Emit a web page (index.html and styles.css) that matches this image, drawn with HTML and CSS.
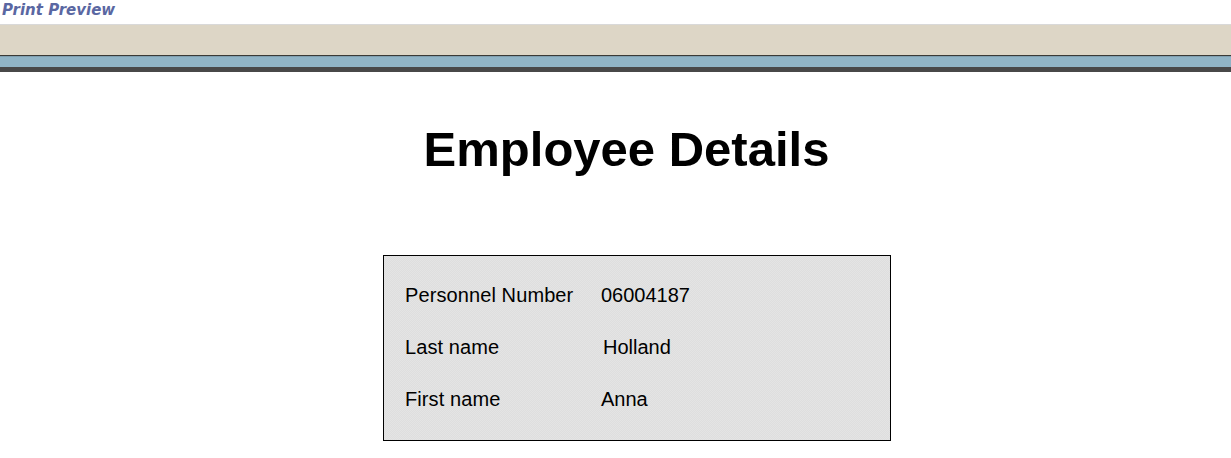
FILE: index.html
```html
<!DOCTYPE html>
<html>
<head>
<meta charset="utf-8">
<link rel="stylesheet" href="styles.css">
</head>
<body>
<header class="topbar">
  <div class="title-strip"><span class="app-title">Print Preview</span></div>
  <div class="toolbar"></div>
  <div class="band-blue"></div>
  <div class="band-dark"></div>
</header>
<main class="page">
  <h1 class="doc-title">Employee Details</h1>
  <section class="details">
    <div class="label">Personnel Number</div><div class="value">06004187</div>
    <div class="label">Last name</div><div class="value value-h">Holland</div>
    <div class="label">First name</div><div class="value">Anna</div>
  </section>
</main>
</body>
</html>
```
FILE: styles.css
```css
html, body {
  margin: 0;
  padding: 0;
  background: #ffffff;
}
body {
  font-family: "Liberation Sans", Arial, sans-serif;
  color: #000;
}
.title-strip {
  box-sizing: border-box;
  height: 25px;
  border-bottom: 1px solid #d9d9d9;
  padding: 1px 0 0 2px;
}
.app-title {
  font-family: "DejaVu Sans", Verdana, sans-serif;
  font-weight: bold;
  font-style: italic;
  font-size: 15px;
  line-height: 19px;
  color: #5a67a2;
}
.toolbar {
  height: 30px;
  background: #ddd6c6;
  border-bottom: 1px solid #3a3a36;
}
.band-blue {
  height: 11px;
  background: #90b4c6;
  border-top: 1px solid #7f9fb0;
  box-sizing: border-box;
}
.band-dark {
  height: 5px;
  background: #484848;
}
.page {
  display: flex;
  flex-direction: column;
}
.doc-title {
  margin: 53px 0 0 22px;
  font-size: 49px;
  line-height: 49px;
  font-weight: bold;
  text-align: center;
}
.details {
  box-sizing: border-box;
  margin: 81px 0 0 383px;
  width: 508px;
  border: 1px solid #000;
  background-color: #e1e1e1;
  background-image: repeating-conic-gradient(#dedede 0 25%, #e4e4e4 0 50%);
  background-size: 2px 2px;
  padding: 29px 0 31px 21px;
  display: grid;
  grid-template-columns: 196px auto;
  row-gap: 32px;
  font-size: 20px;
  line-height: 20px;
}
.label {
  letter-spacing: 0.1px;
}
.value-h {
  padding-left: 2px;
}
```
